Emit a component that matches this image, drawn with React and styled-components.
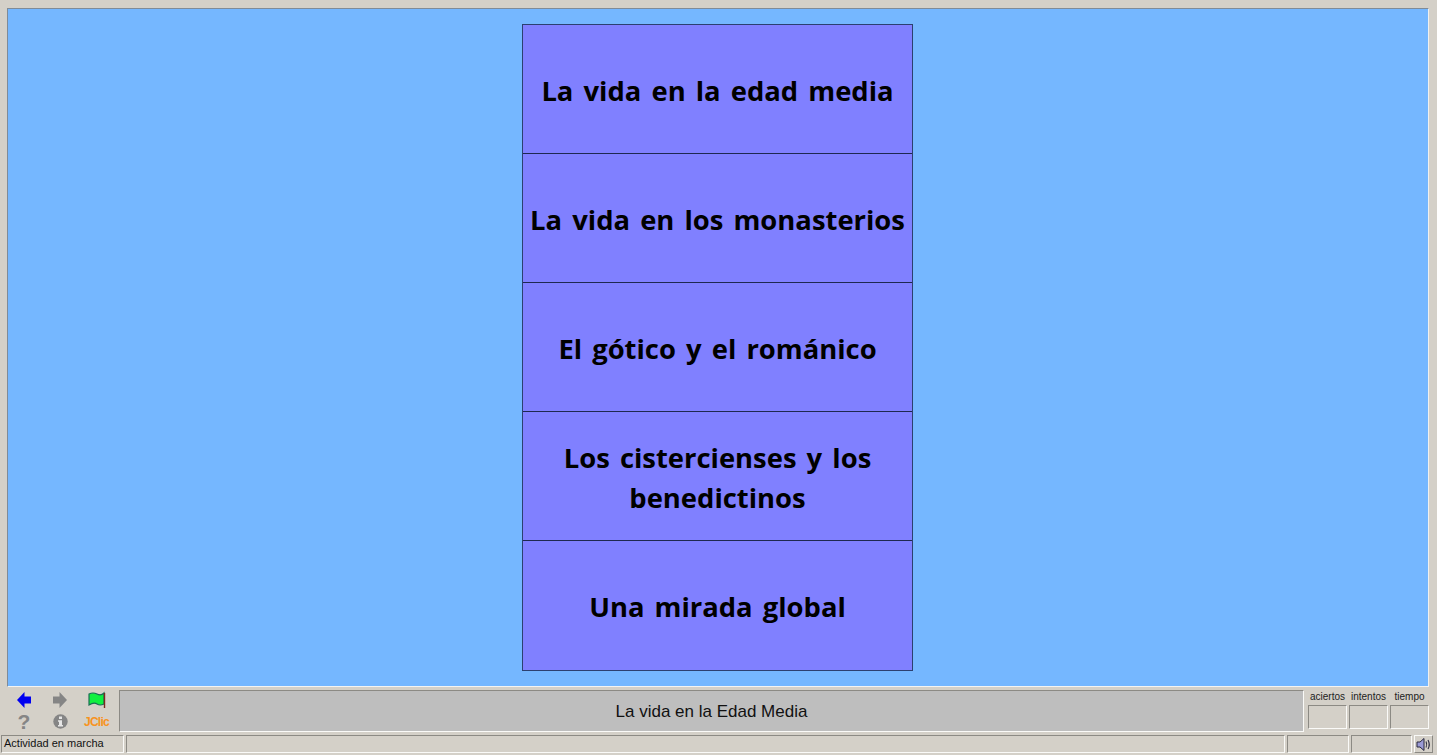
import React from 'react'
import styled, { createGlobalStyle } from 'styled-components'

const Global = createGlobalStyle`
  html, body { margin: 0; padding: 0; height: 100%; overflow: hidden; }
  body { background: #d4d0c8; font-family: 'Liberation Sans', Arial, sans-serif; color: #111; }
`

const Page = styled.div`
  width: 1437px;
  height: 755px;
  display: flex;
  flex-direction: column;
  box-sizing: border-box;
  padding-top: 8px;
`

const Stage = styled.div`
  margin: 0 8px 0 7px;
  height: 679px;
  flex-shrink: 0;
  box-sizing: border-box;
  background: #75b7ff;
  border-top: 1px solid #7f8b98;
  border-left: 1px solid #7f8b98;
  border-right: 1px solid #f0f0ee;
  border-bottom: 1px solid #f4f4f2;
  display: flex;
  justify-content: center;
  padding: 15px 1px 0 0;
`

const Grid = styled.div`
  width: 391px;
  height: 647px;
  box-sizing: border-box;
  border: 1px solid #2c4070;
  display: grid;
  grid-template-rows: 128px repeat(3, 129px) 1fr;
  background: #8080ff;
`

const Cell = styled.div`
  display: flex;
  align-items: center;
  justify-content: center;
  text-align: center;
  padding: 4px 4px 0;
  box-sizing: border-box;
  border-top: ${p => (p.$first ? 'none' : '1px solid #1e2850')};
  font-family: 'Open Sans', sans-serif;
  font-weight: 700;
  font-size: 27.4px;
  line-height: 40px;
  word-spacing: 3px;
  color: #000;

  &:last-child {
    padding-bottom: 2px;
  }
`

const ControlBar = styled.div`
  display: flex;
  height: 44px;
  flex-shrink: 0;
  margin-top: 3px;
  padding: 0 8px 0 7px;
`

const Buttons = styled.div`
  width: 112px;
  flex-shrink: 0;
  margin-top: -1px;
  display: grid;
  grid-template-columns: 34px 38px 35px;
  grid-template-rows: 22px 21px;
  justify-items: center;
  align-items: center;
`

const Help = styled.span`
  font-size: 21px;
  font-weight: 700;
  line-height: 20px;
  color: #858585;
`

const Logo = styled.span`
  font-size: 12px;
  font-weight: 700;
  letter-spacing: -0.7px;
  color: #f7931e;
`

const Title = styled.div`
  width: 1185px;
  height: 42px;
  flex-shrink: 0;
  box-sizing: border-box;
  background: #bebebe;
  border-top: 1px solid #8c8a84;
  border-left: 1px solid #8c8a84;
  border-right: 1px solid #fafaf8;
  border-bottom: 1px solid #fafaf8;
  display: flex;
  align-items: center;
  justify-content: center;
  padding-top: 2px;
  font-size: 17px;
`

const Counters = styled.div`
  display: flex;
  flex-shrink: 0;
  margin-left: 3px;
`

const Counter = styled.div`
  width: 41px;
  display: flex;
  flex-direction: column;
  align-items: center;
  font-size: 10px;
  line-height: 14px;
  color: #222;
`

const CounterBox = styled.div`
  width: 39px;
  height: 24px;
  margin-top: 1px;
  box-sizing: border-box;
  border-top: 1px solid #8c8a84;
  border-left: 1px solid #8c8a84;
  border-right: 1px solid #fafaf8;
  border-bottom: 1px solid #fafaf8;
`

const StatusBar = styled.div`
  display: flex;
  height: 18px;
  flex-shrink: 0;
  margin-top: 1px;
  padding-left: 1px;
  gap: 2px;
`

const StatusCell = styled.div`
  width: ${p => p.$w}px;
  box-sizing: border-box;
  border-top: 1px solid #8c8a84;
  border-left: 1px solid #8c8a84;
  border-right: 1px solid #fafaf8;
  border-bottom: 1px solid #fafaf8;
  font-size: 11px;
  line-height: 15px;
  padding-left: 2px;
  white-space: nowrap;
`

const SoundButton = styled.div`
  width: 19px;
  display: flex;
  align-items: center;
  justify-content: center;
  box-sizing: border-box;
  border-top: 1px solid #fafaf8;
  border-left: 1px solid #fafaf8;
  border-right: 1px solid #8c8a84;
  border-bottom: 1px solid #8c8a84;
`

const Arrow = ({ color, flip }) => (
  <svg width="14" height="16" viewBox="0 0 14 16" style={flip ? { transform: 'scaleX(-1)' } : undefined}>
    <path d="M7.5 0 L0 8 L7.5 16 V11.5 H14 V4.5 H7.5 Z" fill={color} />
  </svg>
)

const Flag = () => (
  <svg width="18" height="18" viewBox="0 0 18 18">
    <path d="M1 3 Q5 1 9 3 T16 2 V13 Q12 15 9 13 T1 14 Z" fill="#10f040" stroke="#1b6d55" strokeWidth="1.2" />
    <path d="M16.5 2 V17" stroke="#7a2a20" strokeWidth="1.4" />
  </svg>
)

const InfoIcon = () => (
  <svg width="15" height="15" viewBox="0 0 15 15">
    <circle cx="7.5" cy="7.5" r="7.2" fill="#858585" />
    <rect x="6" y="2.5" width="3" height="2.5" fill="#e6e6e6" />
    <path d="M5 6.2 H9 V11 H10 V12.6 H5 V11 H6 V7.8 H5 Z" fill="#e6e6e6" />
  </svg>
)

const SpeakerIcon = () => (
  <svg width="16" height="15" viewBox="0 0 16 15">
    <path d="M1 5 H4 L8 1.5 V13.5 L4 10 H1 Z" fill="#9a9ad6" stroke="#28283f" strokeWidth="1" />
    <path d="M10 4.5 Q11.5 7.5 10 10.5 M12 3 Q14.5 7.5 12 12" fill="none" stroke="#28283f" strokeWidth="1.1" />
  </svg>
)

const rows = [
  'La vida en la edad media',
  'La vida en los monasterios',
  'El gótico y el románico',
  'Los cistercienses y los benedictinos',
  'Una mirada global',
]

export default function App() {
  return (
    <Page>
      <Global />
      <Stage>
        <Grid>
          {rows.map((text, i) => (
            <Cell key={text} $first={i === 0}>{text}</Cell>
          ))}
        </Grid>
      </Stage>
      <ControlBar>
        <Buttons>
          <Arrow color="#0000f0" />
          <Arrow color="#858585" flip />
          <Flag />
          <Help>?</Help>
          <InfoIcon />
          <Logo>JClic</Logo>
        </Buttons>
        <Title>La vida en la Edad Media</Title>
        <Counters>
          {['aciertos', 'intentos', 'tiempo'].map(label => (
            <Counter key={label}>
              {label}
              <CounterBox />
            </Counter>
          ))}
        </Counters>
      </ControlBar>
      <StatusBar>
        <StatusCell $w={123}>Actividad en marcha</StatusCell>
        <StatusCell $w={1159} />
        <StatusCell $w={62} />
        <StatusCell $w={61} />
        <SoundButton><SpeakerIcon /></SoundButton>
      </StatusBar>
    </Page>
  )
}
